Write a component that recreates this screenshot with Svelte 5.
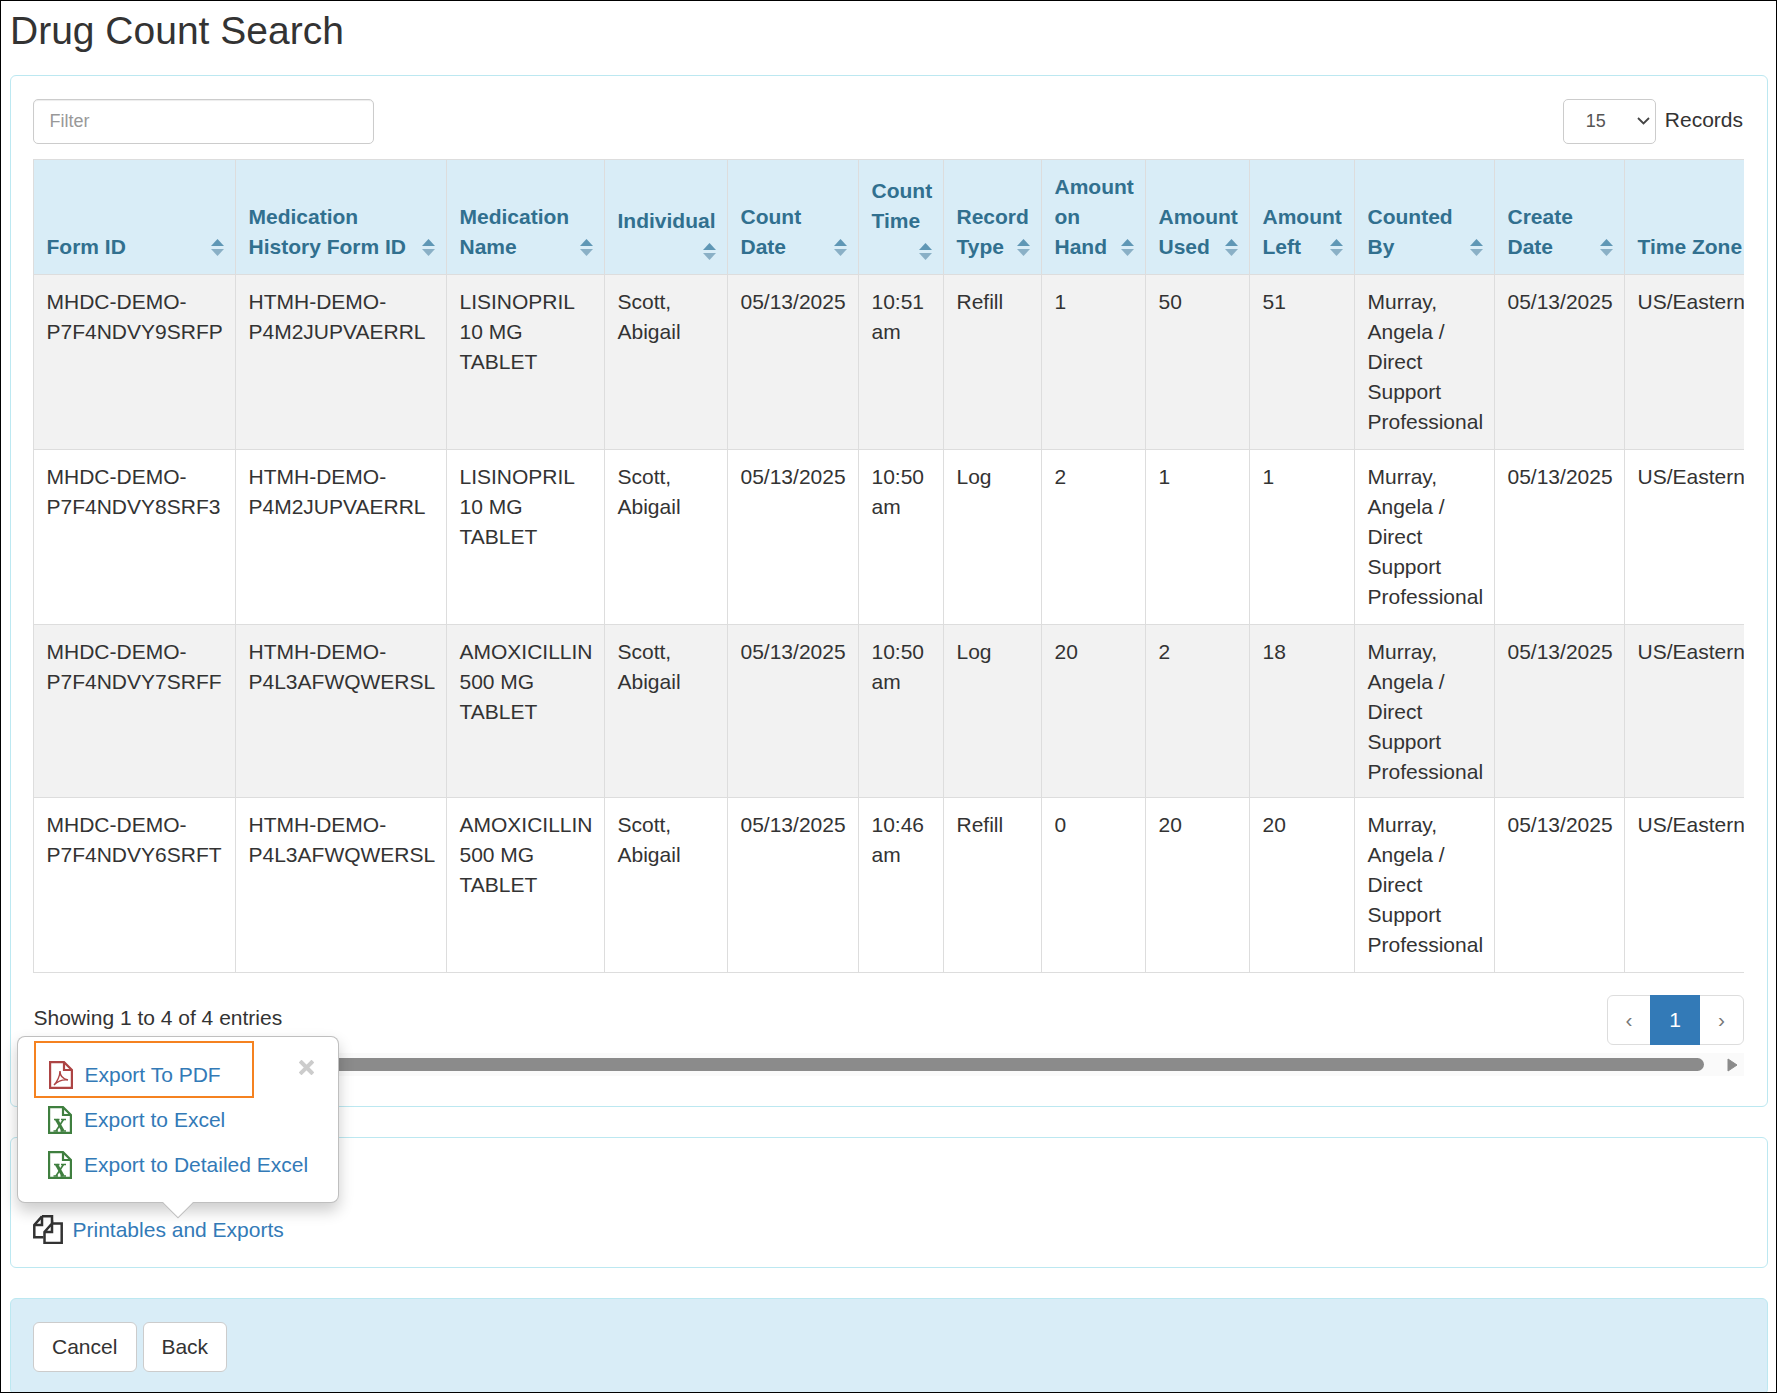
<script>
  const columns = [
    { label: "Form ID", width: 202 },
    { label: "Medication History Form ID", width: 211 },
    { label: "Medication Name", width: 158 },
    { label: "Individual", width: 123 },
    { label: "Count Date", width: 131 },
    { label: "Count Time", width: 85 },
    { label: "Record Type", width: 98 },
    { label: "Amount on Hand", width: 104 },
    { label: "Amount Used", width: 104 },
    { label: "Amount Left", width: 105 },
    { label: "Counted By", width: 140 },
    { label: "Create Date", width: 130 },
    { label: "Time Zone", width: 140, noSort: true },
  ];

  const counter = "Murray, Angela / Direct Support Professional";

  const rows = [
    ["MHDC-DEMO-P7F4NDVY9SRFP", "HTMH-DEMO-P4M2JUPVAERRL", "LISINOPRIL 10 MG TABLET", "Scott, Abigail", "05/13/2025", "10:51 am", "Refill", "1", "50", "51", counter, "05/13/2025", "US/Eastern"],
    ["MHDC-DEMO-P7F4NDVY8SRF3", "HTMH-DEMO-P4M2JUPVAERRL", "LISINOPRIL 10 MG TABLET", "Scott, Abigail", "05/13/2025", "10:50 am", "Log", "2", "1", "1", counter, "05/13/2025", "US/Eastern"],
    ["MHDC-DEMO-P7F4NDVY7SRFF", "HTMH-DEMO-P4L3AFWQWERSL", "AMOXICILLIN 500 MG TABLET", "Scott, Abigail", "05/13/2025", "10:50 am", "Log", "20", "2", "18", counter, "05/13/2025", "US/Eastern"],
    ["MHDC-DEMO-P7F4NDVY6SRFT", "HTMH-DEMO-P4L3AFWQWERSL", "AMOXICILLIN 500 MG TABLET", "Scott, Abigail", "05/13/2025", "10:46 am", "Refill", "0", "20", "20", counter, "05/13/2025", "US/Eastern"],
  ];

  const tableWidth = columns.reduce((sum, c) => sum + c.width, 0);
</script>

{#snippet excelIcon()}
  <svg class="file-icon" viewBox="0 0 24 28" fill="none" stroke="#3f7f3f" stroke-width="2.2">
    <path d="M1.100 1.100H15L22.900 9V26.900H1.100Z" />
    <path d="M15 1.100V9H22.900" />
    <path d="M8.500 13.500L15 25" stroke-width="3.200" />
    <path d="M15.500 13.500L8 25" stroke-width="1.600" />
    <path d="M6 13.500H11.500M13 13.500H18M5.500 25H10M12.500 25H18" stroke-width="1.500" />
  </svg>
{/snippet}

<div class="page">
  <h1>Drug Count Search</h1>

  <section class="panel results">
    <div class="controls">
      <input class="filter" type="text" placeholder="Filter" />
      <div class="records">
        <div class="select-wrap">
          <select class="length">
            <option>15</option>
          </select>
          <svg class="chevron" viewBox="0 0 13 8" fill="none" stroke="#444" stroke-width="1.800">
            <path d="M1 1L6.500 6.500L12 1" />
          </svg>
        </div>
        <span>Records</span>
      </div>
    </div>

    <div class="table-wrap">
      <table style="width: {tableWidth}px">
        <colgroup>
          {#each columns as col}
            <col style="width: {col.width}px" />
          {/each}
        </colgroup>
        <thead>
          <tr>
            {#each columns as col}
              <th>
                {col.label}
                {#if !col.noSort}
                  <svg class="sort" viewBox="0 0 13 17">
                    <path d="M6.500 0L13 7H0Z" fill="#5f97b5" />
                    <path d="M0 10H13L6.500 17Z" fill="#8ab0c6" />
                  </svg>
                {/if}
              </th>
            {/each}
          </tr>
        </thead>
        <tbody>
          {#each rows as row}
            <tr>
              {#each row as cell}
                <td>{cell}</td>
              {/each}
            </tr>
          {/each}
        </tbody>
      </table>
    </div>

    <div class="table-foot">
      <div class="info">Showing 1 to 4 of 4 entries</div>
      <div class="pagination">
        <span class="page-btn prev">‹</span>
        <span class="page-btn active">1</span>
        <span class="page-btn">›</span>
      </div>
    </div>

    <div class="scrollbar">
      <div class="thumb"></div>
      <svg class="scroll-arrow" viewBox="0 0 11 14">
        <path d="M1 1L10 7L1 13Z" fill="#8b8b8b" stroke="#8b8b8b" stroke-linejoin="round" />
      </svg>
    </div>
  </section>

  <section class="panel exports">
    <div class="export-anchor">
      <div class="popover">
        <button class="close" aria-label="Close">
          <svg viewBox="0 0 15 15" width="15" height="15">
            <path d="M2.500 2.500L12.500 12.500M12.500 2.500L2.500 12.500" stroke="#ccc" stroke-width="4" stroke-linecap="square" />
          </svg>
        </button>
        <div class="export-row highlighted">
          <svg class="file-icon" viewBox="0 0 24 28" fill="none" stroke="#ad4444" stroke-width="2.200">
            <path d="M1.100 1.100H15L22.900 9V26.900H1.100Z" />
            <path d="M15 1.100V9H22.900" />
            <path d="M5 24C8 21 11 15 11 10C11 15 14 18 19 19C15 18.500 9 20 5 24Z" stroke-width="1.400" />
          </svg>
          <a href="#pdf">Export To PDF</a>
        </div>
        <div class="export-row">
          {@render excelIcon()}
          <a href="#excel">Export to Excel</a>
        </div>
        <div class="export-row">
          {@render excelIcon()}
          <a href="#detailed">Export to Detailed Excel</a>
        </div>
      </div>
      <svg class="print-icon" viewBox="0 0 30 29" fill="none" stroke="#333" stroke-width="2.500">
        <path d="M9 1.300H19V8M9 1.300L1.300 10V22.300H10.500" />
        <path d="M1.300 10H9V1.300" />
        <path d="M19 8.500H28.700V28H11.500V17L19 8.500V17H11.500" />
      </svg>
      <a href="#exports">Printables and Exports</a>
    </div>
  </section>

  <section class="panel actions">
    <button class="btn">Cancel</button>
    <button class="btn">Back</button>
  </section>
</div>

<style>
  :global(body) {
    margin: 0;
    background: #fff;
  }

  .page {
    box-sizing: border-box;
    height: 1393px;
    overflow: hidden;
    border: 1px solid #000;
    padding: 0 8.5px 0 9px;
    font-family: "Liberation Sans", Arial, sans-serif;
    font-size: 21px;
    line-height: 30px;
    color: #333;
  }

  h1 {
    margin: 8px 0 23px;
    font-size: 39px;
    font-weight: 400;
    line-height: 43px;
  }

  .panel {
    border: 1px solid #bce8f1;
    border-radius: 6px;
    margin-bottom: 30.500px;
    padding: 22.500px 22.500px 22.500px 21.500px;
    background: #fff;
  }

  .results {
    margin-bottom: 29.500px;
    padding-bottom: 30px;
  }

  .controls {
    display: flex;
    justify-content: space-between;
    margin-bottom: 15px;
  }

  .filter {
    box-sizing: border-box;
    width: 341px;
    height: 45px;
    padding: 0 16px;
    border: 1px solid #ccc;
    border-radius: 5px;
    font: 18px "Liberation Sans", Arial, sans-serif;
    color: #555;
    box-shadow: inset 0 1px 1px rgba(0, 0, 0, 0.075);
  }

  .filter::placeholder {
    color: #999;
  }

  .records {
    display: flex;
    align-items: flex-start;
    gap: 9px;
    margin-right: 1px;
    line-height: 42px;
  }

  .select-wrap {
    position: relative;
    height: 45px;
  }

  .length {
    box-sizing: border-box;
    appearance: none;
    width: 93px;
    height: 45px;
    padding: 0 0 0 22px;
    border: 1px solid #ccc;
    border-radius: 5px;
    background: #fff;
    font: 18px "Liberation Sans", Arial, sans-serif;
    color: #555;
  }

  .chevron {
    position: absolute;
    top: 18px;
    right: 6px;
    width: 13px;
    height: 8px;
    pointer-events: none;
  }

  .table-wrap {
    overflow: hidden;
  }

  table {
    table-layout: fixed;
    border-collapse: collapse;
  }

  th,
  td {
    border: 1px solid #ddd;
    padding: 12px 11px 12px 13px;
    text-align: left;
  }

  th {
    vertical-align: bottom;
    background: #d9edf7;
    color: #31708f;
    font-weight: 700;
  }

  td {
    vertical-align: top;
  }

  tbody tr:nth-child(odd) td {
    background: #f2f2f2;
  }

  tbody tr:nth-child(3) td {
    padding-bottom: 10px;
  }

  .sort {
    float: right;
    width: 13px;
    height: 17px;
    margin: 7px 0 2px;
  }

  .table-foot {
    display: flex;
    justify-content: space-between;
    margin-top: 22.500px;
  }

  .info {
    padding: 8px 0 0 1px;
  }

  .pagination {
    display: flex;
    height: 50px;
    box-sizing: border-box;
    border: 1px solid #ddd;
    border-radius: 6px;
  }

  .page-btn {
    display: flex;
    align-items: center;
    justify-content: center;
    width: 43px;
    color: #777;
  }

  .page-btn.prev {
    width: 42px;
  }

  .page-btn.active {
    width: 50px;
    margin: -1px 0;
    background: #337ab7;
    color: #fff;
  }

  .scrollbar {
    display: flex;
    align-items: center;
    height: 23px;
    margin-top: 8px;
    padding-left: 180px;
    padding-right: 6px;
    background: #fafafa;
  }

  .thumb {
    flex: 1;
    height: 13px;
    border-radius: 7px;
    background: #8b8b8b;
  }

  .scroll-arrow {
    width: 11px;
    height: 14px;
    margin-left: 23px;
  }

  .exports {
    padding-top: 77px;
    padding-bottom: 22px;
  }

  .export-anchor {
    position: relative;
    display: flex;
    align-items: center;
    gap: 10px;
    height: 30px;
  }

  a {
    color: #337ab7;
    text-decoration: none;
  }

  .print-icon {
    width: 30px;
    height: 29px;
  }

  .popover {
    position: absolute;
    left: -16px;
    bottom: 42px;
    box-sizing: border-box;
    width: 322px;
    height: 167px;
    padding: 4px 0 0 16px;
    border: 1px solid rgba(0, 0, 0, 0.25);
    border-radius: 8px;
    background: #fff;
    box-shadow: 0 7.500px 15px rgba(0, 0, 0, 0.2);
  }

  .popover::after {
    content: "";
    position: absolute;
    left: 149px;
    bottom: -12px;
    width: 22px;
    height: 22px;
    box-sizing: border-box;
    border-right: 1px solid rgba(0, 0, 0, 0.25);
    border-bottom: 1px solid rgba(0, 0, 0, 0.25);
    background: #fff;
    transform: rotate(45deg);
  }

  .close {
    position: absolute;
    top: 23px;
    right: 24px;
    padding: 0;
    border: 0;
    background: none;
    line-height: 0;
  }

  .export-row {
    display: flex;
    align-items: center;
    gap: 12px;
    height: 45px;
    padding-left: 14.500px;
  }

  .export-row.highlighted {
    box-sizing: border-box;
    width: 220px;
    height: 57px;
    padding-top: 12px;
    padding-left: 13px;
    border: 2px solid #f58220;
  }

  .file-icon {
    width: 24px;
    height: 28px;
    flex: none;
  }

  .actions {
    display: flex;
    gap: 6px;
    background: #d9edf7;
    margin-bottom: 0;
  }

  .btn {
    box-sizing: border-box;
    height: 50px;
    padding: 0 18.500px;
    border: 1px solid #ccc;
    border-radius: 6px;
    background: #fff;
    color: #333;
    font: 21px "Liberation Sans", Arial, sans-serif;
  }

  .btn + .btn {
    padding: 0 17.500px;
  }
</style>
